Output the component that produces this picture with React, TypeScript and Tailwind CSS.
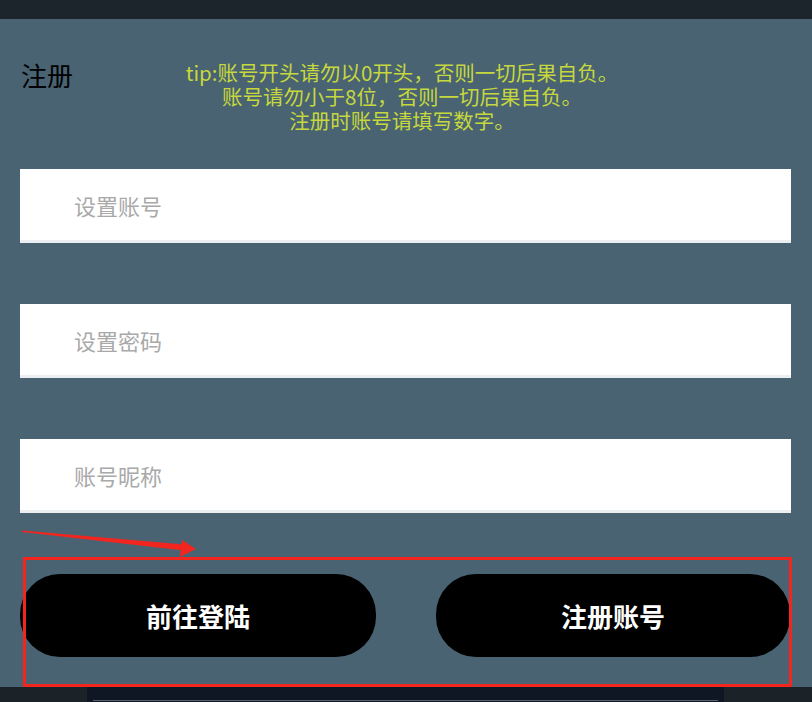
const FONT = "font-['Noto_Sans_CJK_SC','Noto_Sans',sans-serif]";

const FIELDS = ["设置账号", "设置密码", "账号昵称"];

const TIPS = [
  "tip:账号开头请勿以0开头，否则一切后果自负。",
  "账号请勿小于8位，否则一切后果自负。",
  "注册时账号请填写数字。",
];

function Field({ placeholder }: { placeholder: string }) {
  return (
    <div className="h-[74px] bg-white border-b-[3px] border-[#eceff1] flex items-center">
      <input
        className={`w-full h-full pl-[54px] bg-transparent outline-none text-[22px] text-[#333] placeholder:text-[#a9a9a9] ${FONT}`}
        placeholder={placeholder}
      />
    </div>
  );
}

function PillButton({ label, className }: { label: string; className: string }) {
  return (
    <button
      className={`h-[83px] rounded-[40px] bg-black text-white text-[26px] font-bold flex items-center justify-center ${FONT} ${className}`}
    >
      {label}
    </button>
  );
}

export default function App() {
  return (
    <div className={`relative w-full h-[702px] bg-[#496373] flex flex-col overflow-hidden ${FONT}`}>
      {/* status bar */}
      <div className="h-[19px] bg-[#1c252c]" />

      {/* header: title + tips */}
      <div className="flex items-start pt-[41px] pl-[21px] pr-[81px] mb-[37px]">
        <div className="text-[26px] leading-[30px] text-black">注册</div>
        <div className="flex-1 text-center text-[20.5px] leading-[24px] text-[#c6d83c]">
          {TIPS.map((t) => (
            <p key={t} className="h-[24px] whitespace-nowrap">
              {t}
            </p>
          ))}
        </div>
      </div>

      {/* form fields */}
      <div className="flex flex-col gap-[61px] ml-[20px] mr-[21px]">
        {FIELDS.map((f) => (
          <Field key={f} placeholder={f} />
        ))}
      </div>

      {/* actions */}
      <div className="flex mt-[61px] pl-[20px] gap-[60px]">
        <PillButton label="前往登陆" className="w-[356px]" />
        <PillButton label="注册账号" className="w-[354px]" />
      </div>

      <div className="flex-1" />

      {/* bottom nav */}
      <div className="h-[15px] bg-[#1b2329] flex justify-center pl-[87px] pr-[88px]">
        <div className="flex-1 bg-[#0f1724] px-[6px] pt-[13px]">
          <div className="h-px bg-[#5a6068]" />
        </div>
      </div>

      {/* annotation overlay */}
      <div className="absolute left-[23px] top-[557px] w-[769px] h-[130px] border-[3px] border-[#f2261e]" />
      <svg className="absolute left-0 top-0 pointer-events-none" width="812" height="702">
        <polygon points="22,530.5 184,544.5 184,550.5 22,532" fill="#f2261e" />
        <polygon points="182,540 196,549 180,557" fill="#f2261e" />
      </svg>
    </div>
  );
}
